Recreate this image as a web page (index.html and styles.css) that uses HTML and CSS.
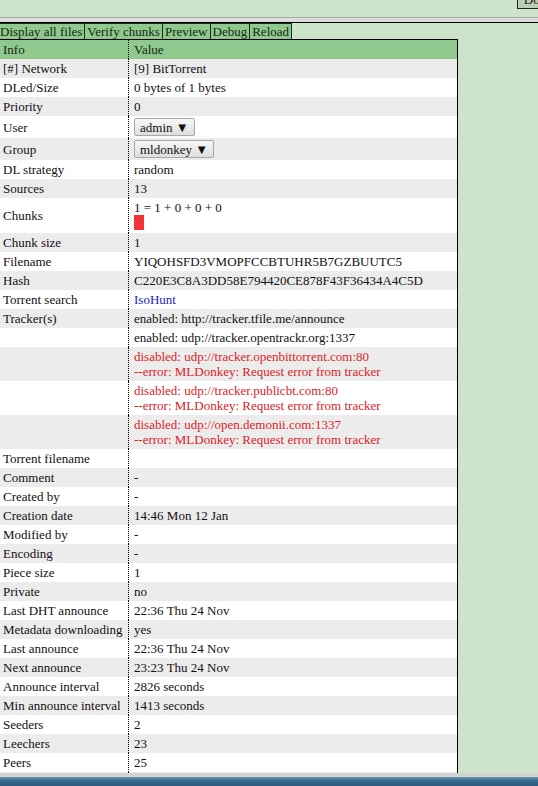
FILE: index.html
```html
<!doctype html>
<html>
<head>
<meta charset='UTF-8'>
<title>MLDonkey: file info</title>
<link rel="stylesheet" href="styles.css">
</head>
<body>
<div class='top-bar'><button class='top-button'>Downloads</button></div>
<div class='top-rule'></div>
<div class='tabs'>
<a class='tab'>Display all files</a><a class='tab'>Verify chunks</a><a class='tab'>Preview</a><a class='tab'>Debug</a><a class='tab'>Reload</a>
</div>
<table class='info-table'>
<thead>
<tr><td class='key'>Info</td><td class='val'>Value</td></tr>
</thead>
<tbody>
<tr><td class='key'>[#] Network</td><td class='val'>[9] BitTorrent</td></tr>
<tr><td class='key'>DLed/Size</td><td class='val'>0 bytes of 1 bytes</td></tr>
<tr><td class='key'>Priority</td><td class='val'>0</td></tr>
<tr><td class='key'>User</td><td class='val'><button class='drop'>admin ▼</button></td></tr>
<tr><td class='key'>Group</td><td class='val'><button class='drop'>mldonkey ▼</button></td></tr>
<tr><td class='key'>DL strategy</td><td class='val'>random</td></tr>
<tr><td class='key'>Sources</td><td class='val'>13</td></tr>
<tr><td class='key'>Chunks</td><td class='val'>1 = 1 + 0 + 0 + 0<div class='chunk-bar'><span class='chunk missing'></span></div></td></tr>
<tr><td class='key'>Chunk size</td><td class='val'>1</td></tr>
<tr><td class='key'>Filename</td><td class='val'>YIQOHSFD3VMOPFCCBTUHR5B7GZBUUTC5</td></tr>
<tr><td class='key'>Hash</td><td class='val'>C220E3C8A3DD58E794420CE878F43F36434A4C5D</td></tr>
<tr><td class='key'>Torrent search</td><td class='val'><a class='link'>IsoHunt</a></td></tr>
<tr><td class='key'>Tracker(s)</td><td class='val'>enabled: http://tracker.tfile.me/announce</td></tr>
<tr><td class='key'></td><td class='val'>enabled: udp://tracker.opentrackr.org:1337</td></tr>
<tr><td class='key'></td><td class='val bad'>disabled: udp://tracker.openbittorrent.com:80<br>--error: MLDonkey: Request error from tracker</td></tr>
<tr><td class='key'></td><td class='val bad'>disabled: udp://tracker.publicbt.com:80<br>--error: MLDonkey: Request error from tracker</td></tr>
<tr><td class='key'></td><td class='val bad'>disabled: udp://open.demonii.com:1337<br>--error: MLDonkey: Request error from tracker</td></tr>
<tr><td class='key'>Torrent filename</td><td class='val'></td></tr>
<tr><td class='key'>Comment</td><td class='val'>-</td></tr>
<tr><td class='key'>Created by</td><td class='val'>-</td></tr>
<tr><td class='key'>Creation date</td><td class='val'>14:46 Mon 12 Jan</td></tr>
<tr><td class='key'>Modified by</td><td class='val'>-</td></tr>
<tr><td class='key'>Encoding</td><td class='val'>-</td></tr>
<tr><td class='key'>Piece size</td><td class='val'>1</td></tr>
<tr><td class='key'>Private</td><td class='val'>no</td></tr>
<tr><td class='key'>Last DHT announce</td><td class='val'>22:36 Thu 24 Nov</td></tr>
<tr><td class='key'>Metadata downloading</td><td class='val'>yes</td></tr>
<tr><td class='key'>Last announce</td><td class='val'>22:36 Thu 24 Nov</td></tr>
<tr><td class='key'>Next announce</td><td class='val'>23:23 Thu 24 Nov</td></tr>
<tr><td class='key'>Announce interval</td><td class='val'>2826 seconds</td></tr>
<tr><td class='key'>Min announce interval</td><td class='val'>1413 seconds</td></tr>
<tr><td class='key'>Seeders</td><td class='val'>2</td></tr>
<tr><td class='key'>Leechers</td><td class='val'>23</td></tr>
<tr><td class='key'>Peers</td><td class='val'>25</td></tr>
<tr><td class='key'>Downloaded</td><td class='val'>0 bytes</td></tr>
</tbody>
</table>
<div class='status-bar'></div>
</body>
</html>
```

FILE: styles.css
```css
body
{
margin: 0;
font-family: "Liberation Serif", serif;
font-size: 13px;
background-color: #cce5ca;
color: #111;
}

/* top frame, only the bottom of its buttons shows */
.top-bar
{
height: 17px;
overflow: hidden;
display: flex;
justify-content: flex-end;
}

.top-button
{
margin-top: -9px;
margin-right: -52px;
height: 18px;
padding: 0 6px;
font-family: inherit;
font-size: 13px;
color: #111;
background-color: #b9d0b7;
border: 1px solid #222;
border-radius: 0;
}

.top-rule
{
height: 4px;
background-color: #dcdcdc;
border-top: 1px solid #aaa;
border-bottom: 1px solid #000;
}

.tabs
{
display: flex;
}

.tab
{
padding: 0 2px;
line-height: 15px;
background-color: #90c98e;
color: #142814;
border: 1px solid #1a2a1a;
border-left: 0;
border-bottom: 0;
}

.tab:first-child
{
padding-left: 0;
}

.info-table
{
width: 458px;
border-collapse: collapse;
border-top: 1px solid #000;
border-right: 1px solid #000;
}

.info-table td
{
padding: 2px 3px;
line-height: 15px;
white-space: nowrap;
}

.info-table thead td
{
background-color: #90c98e;
color: #142814;
}

.info-table tbody tr:nth-child(odd)
{
background-color: #ececec;
}

.info-table tbody tr:nth-child(even)
{
background-color: #fff;
}

.key
{
width: 122px;
}

.val
{
padding-left: 5px !important;
border-left: 1px dotted #000;
}

.bad
{
color: #dd2229;
}

.link
{
color: #2424c0;
}

.drop
{
display: block;
height: 18px;
padding: 0 5px;
margin: 0;
font-family: inherit;
font-size: 13px;
line-height: 15px;
color: #111;
background: linear-gradient(#f8f8f8, #dedede);
border: 1px solid #a8a8a8;
border-radius: 2px;
}

.chunk-bar
{
display: flex;
height: 16px;
}

.chunk
{
width: 10px;
height: 15px;
}

.chunk.missing
{
background-color: #f23434;
}

.status-bar
{
position: fixed;
left: 0;
right: 0;
bottom: 0;
height: 9px;
border-top: 4px solid #d3d3d3;
background: linear-gradient(#6f9cbc, #3a6d90 35%, #2b5a7c);
}
```
